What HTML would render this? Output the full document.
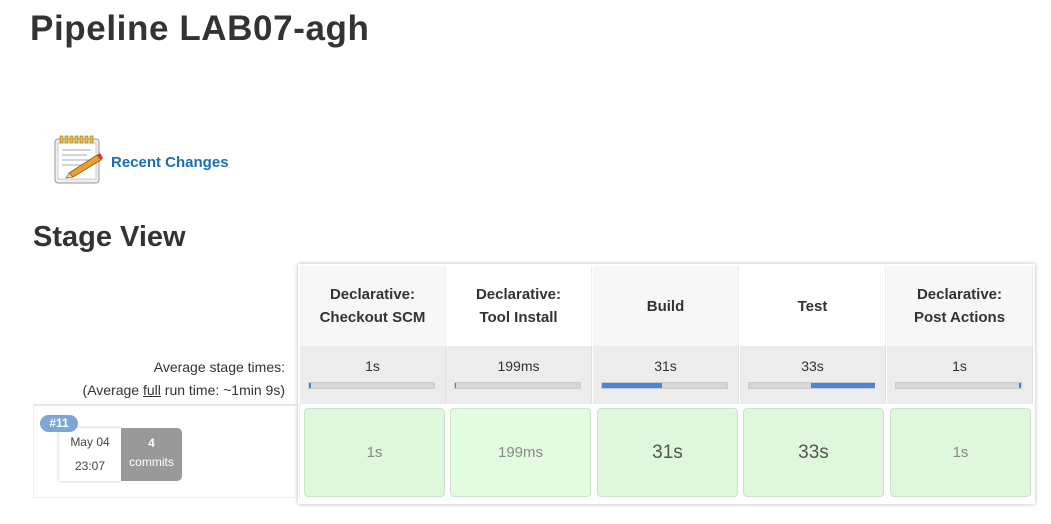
<!DOCTYPE html>
<html><head><style>
body{margin:0;width:1051px;height:524px;background:#fff;font-family:"Liberation Sans","DejaVu Sans",sans-serif;position:relative;overflow:hidden;color:#333}
.a{position:absolute}
h1{position:absolute;left:30px;top:9px;margin:0;font-size:35px;font-weight:bold;color:#333;letter-spacing:0.6px}
h2{position:absolute;left:33px;top:221px;margin:0;font-size:29px;font-weight:bold;color:#333}
.hd{position:absolute;top:266px;height:80px;width:146px;display:flex;align-items:center;justify-content:center;text-align:center;font-weight:bold;font-size:15px;line-height:23px;color:#333;border-right:1px solid #eee;box-sizing:border-box}
.av{position:absolute;top:346px;height:58px;width:146px;background:#ececec;text-align:center;font-size:14px;border-right:1px solid #e0e0e0;box-sizing:border-box}
.av span{position:absolute;left:0;right:0;top:12px}
.bar{position:absolute;left:8px;right:10px;top:36px;height:5px;background:#d6d6d6;border:1px solid #ccc}
.bar i{position:absolute;top:0;height:5px;background:#4a84d8}
.cl{position:absolute;top:408px;height:89px;width:141px;background:#dff7dd;border:1px solid #c8e6c5;border-radius:4px;box-sizing:border-box;display:flex;align-items:center;justify-content:center;font-size:15px;color:#888}
.big{font-size:19px;color:#555}
</style></head><body>
<h1>Pipeline LAB07-agh</h1>
<svg class="a" style="left:53px;top:134px" width="52" height="52" viewBox="0 0 52 52">
<rect x="2" y="5" width="44" height="44" rx="3" fill="#eee" stroke="#999"/>
<rect x="5" y="9" width="38" height="36" fill="#fff" stroke="#ccc"/>
<g fill="#e8c040" stroke="#9a7a20" stroke-width=".6"><rect x="7" y="2" width="3" height="7"/><rect x="12" y="2" width="3" height="7"/><rect x="17" y="2" width="3" height="7"/><rect x="22" y="2" width="3" height="7"/><rect x="27" y="2" width="3" height="7"/><rect x="32" y="2" width="3" height="7"/><rect x="37" y="2" width="3" height="7"/></g>
<g stroke="#bbb" stroke-width="1.2"><line x1="9" y1="16" x2="38" y2="16"/><line x1="9" y1="21" x2="34" y2="21"/><line x1="9" y1="26" x2="38" y2="26"/><line x1="9" y1="31" x2="30" y2="31"/></g>
<path d="M16 39 L44 21 L48 26 L20 43 Z" fill="#e8a030" stroke="#8a5a10" stroke-width=".8"/>
<path d="M44 21 L47 19 L50 24 L48 26Z" fill="#e03030"/>
<path d="M16 39 L20 43 L13 44Z" fill="#f0d0a0" stroke="#8a5a10" stroke-width=".6"/>
</svg>
<div class="a" style="left:111px;top:154px;font-size:15px;font-weight:bold;color:#1a6fb0">Recent Changes</div>
<h2>Stage View</h2>
<div class="a" style="left:298px;top:264px;width:737px;height:240px;box-shadow:0 0 4px rgba(0,0,0,.3);background:#fff"></div>
<div class="hd" style="left:300px;background:#f7f7f7">Declarative:<br>Checkout SCM</div>
<div class="hd" style="left:446px;background:#fff">Declarative:<br>Tool Install</div>
<div class="hd" style="left:593px;background:#f7f7f7">Build</div>
<div class="hd" style="left:740px;background:#fff">Test</div>
<div class="hd" style="left:887px;background:#f7f7f7">Declarative:<br>Post Actions</div>
<div class="av" style="left:300px"><span>1s</span><div class="bar"><i style="left:0;width:2px"></i></div></div>
<div class="av" style="left:446px"><span>199ms</span><div class="bar"><i style="left:0;width:1px"></i></div></div>
<div class="av" style="left:593px"><span>31s</span><div class="bar"><i style="left:0;width:60px"></i></div></div>
<div class="av" style="left:740px"><span>33s</span><div class="bar"><i style="left:62px;width:64px"></i></div></div>
<div class="av" style="left:887px"><span>1s</span><div class="bar"><i style="right:0;width:2px"></i></div></div>
<div class="a" style="right:766px;top:356px;font-size:14px;text-align:right;line-height:23px;color:#333">Average stage times:<br>(Average <u>full</u> run time: ~1min 9s)</div>
<div class="a" style="left:33px;top:404px;width:267px;height:94px;border:1px solid #eee;border-top:2px solid #e6e6e6;box-sizing:border-box"></div>
<div class="a" style="left:59px;top:428px;width:62px;height:53px;background:#fff;box-shadow:0 0 3px rgba(0,0,0,.25);font-size:12px;text-align:center;line-height:24px;color:#444;padding-top:2px;box-sizing:border-box">May 04<br>23:07</div>
<div class="a" style="left:121px;top:428px;width:61px;height:53px;background:#999;border-radius:0 5px 5px 0;color:#fff;font-size:12px;text-align:center;line-height:19px;padding-top:6px;box-sizing:border-box"><b>4</b><br>commits</div>
<div class="a" style="left:40px;top:415px;width:38px;height:17px;background:#7ea6d6;border-radius:9px;color:#fff;font-size:12px;font-weight:bold;text-align:center;line-height:17px">#11</div>
<div class="cl" style="left:304px">1s</div>
<div class="cl" style="left:450px;background:#e3fbe0">199ms</div>
<div class="cl big" style="left:597px">31s</div>
<div class="cl big" style="left:743px">33s</div>
<div class="cl" style="left:890px">1s</div>
</body></html>
